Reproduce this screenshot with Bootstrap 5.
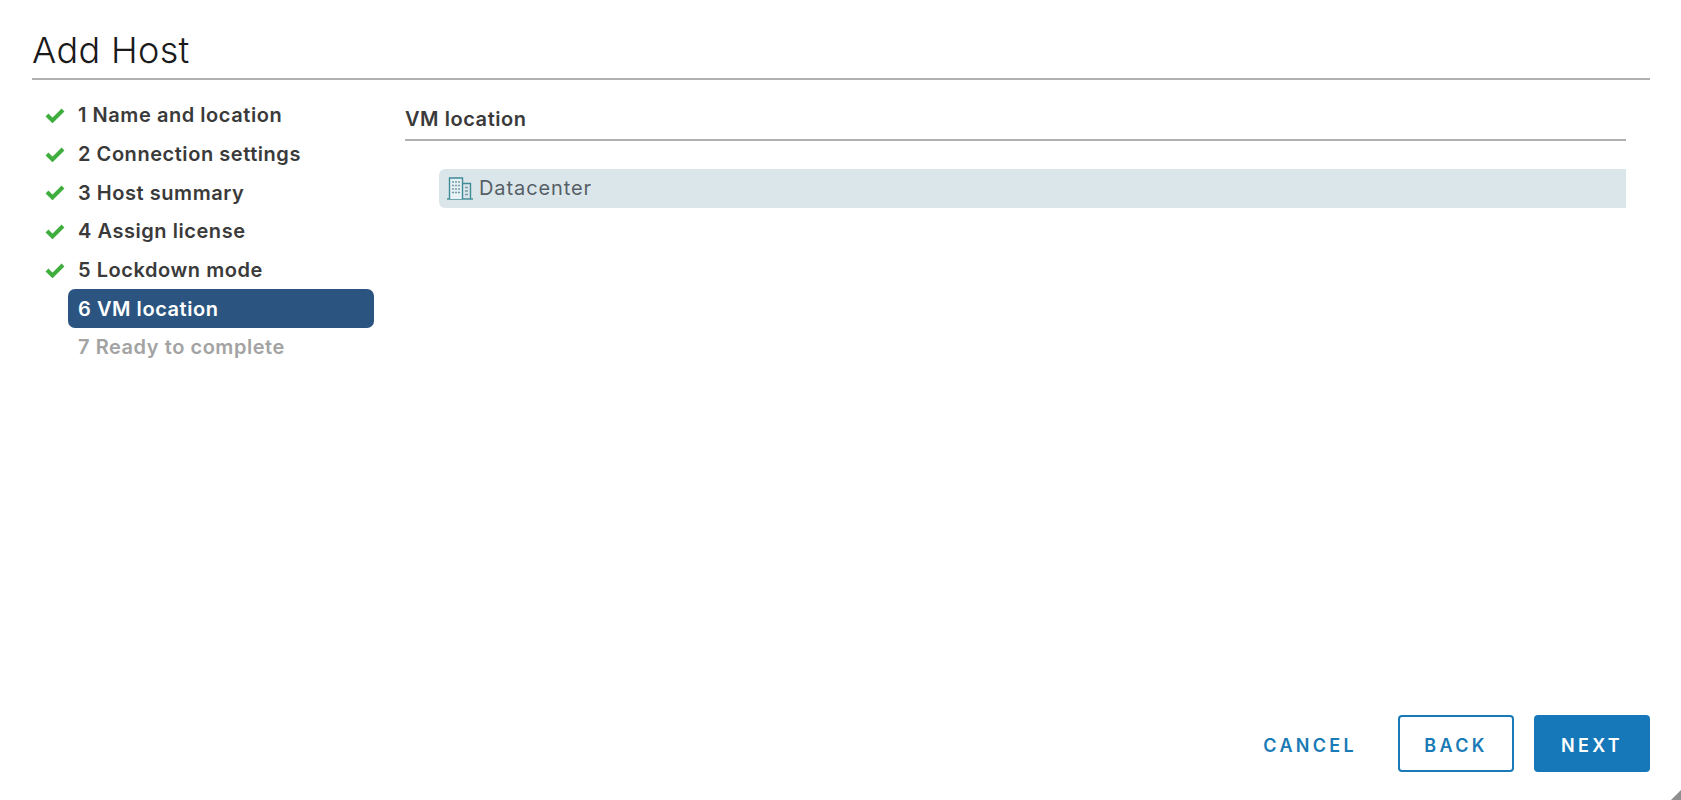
<!DOCTYPE html>
<html lang="en">
<head>
<meta charset="utf-8">
<title>Add Host</title>
<link href="https://cdn.jsdelivr.net/npm/bootstrap@5.3.0/dist/css/bootstrap.min.css" rel="stylesheet">
<style>
html,body{height:100%;background:#fff;overflow:hidden}
body{font-family:Inter,"Liberation Sans",sans-serif;color:#333}
.wiz-shell{height:800px;padding:0 31px 0 32px;position:relative}
.wiz-title{font-size:36px;font-weight:300;line-height:44px;color:#1a1a1a;margin:0;padding-top:28px;padding-bottom:6px;border-bottom:2px solid #b0b0b0;letter-spacing:.35px}
.wiz-body{min-height:0}
.wiz-side{width:342px;padding:16px 0 0 0;flex:none}
.wiz-step{height:38.7px;font-size:20px;font-weight:600;letter-spacing:.55px;color:#3a3a3a;padding-left:46px;position:relative;display:flex;align-items:center;white-space:nowrap}
.wiz-check{position:absolute;left:13px;top:11px;width:20px;height:16px}
.wiz-step-on{background:#2b5580;color:#fff;border-radius:7px;margin-left:36px;padding-left:10px;width:306px}
.wiz-step-off{color:#a3a3a3}
.wiz-main{padding:0 24px 0 31px}
.wiz-head{font-size:20px;font-weight:600;letter-spacing:.55px;color:#3a3a3a;margin:0;padding-top:22px;height:61px;border-bottom:2px solid #b0b0b0;line-height:34px}
.wiz-row{margin:28px 0 0 34px;height:39px;background:#dbe6eb;border-radius:6px 0 0 6px;padding-left:8px;padding-bottom:2px;font-size:20px;letter-spacing:.9px;color:#565f66;gap:6px}
.wiz-foot{padding-bottom:28px;gap:20px}
.wiz-btn{width:116px;height:57px;font-size:18px;font-weight:600;letter-spacing:3.3px;border-radius:4px;display:flex;align-items:center;justify-content:center;padding:3px 0 0;font-family:Inter,"Liberation Sans",sans-serif}
.wiz-cancel{width:auto;color:#1a7ab5;background:transparent;border:0;margin-right:21px}
.wiz-back{color:#1a7ab5;background:#fff;border:2px solid #1a7ab5}
.wiz-next{color:#fff;background:#1678b8;border:2px solid #1678b8}
.wiz-grip{position:absolute;right:0;bottom:0;width:12px;height:10px}
</style>
</head>
<body>
<div class="wiz-shell d-flex flex-column">
  <h1 class="wiz-title">Add Host</h1>
  <div class="wiz-body d-flex flex-grow-1">
    <ul class="wiz-side list-unstyled mb-0">
      <li class="wiz-step"><svg class="wiz-check" viewBox="0 0 20 16"><path d="M2 8l5.5 5.5L18 3" fill="none" stroke="#3fae3f" stroke-width="4"/></svg>1 Name and location</li>
      <li class="wiz-step"><svg class="wiz-check" viewBox="0 0 20 16"><path d="M2 8l5.5 5.5L18 3" fill="none" stroke="#3fae3f" stroke-width="4"/></svg>2 Connection settings</li>
      <li class="wiz-step"><svg class="wiz-check" viewBox="0 0 20 16"><path d="M2 8l5.5 5.5L18 3" fill="none" stroke="#3fae3f" stroke-width="4"/></svg>3 Host summary</li>
      <li class="wiz-step"><svg class="wiz-check" viewBox="0 0 20 16"><path d="M2 8l5.5 5.5L18 3" fill="none" stroke="#3fae3f" stroke-width="4"/></svg>4 Assign license</li>
      <li class="wiz-step"><svg class="wiz-check" viewBox="0 0 20 16"><path d="M2 8l5.5 5.5L18 3" fill="none" stroke="#3fae3f" stroke-width="4"/></svg>5 Lockdown mode</li>
      <li class="wiz-step wiz-step-on">6 VM location</li>
      <li class="wiz-step wiz-step-off">7 Ready to complete</li>
    </ul>
    <div class="wiz-main flex-grow-1">
      <h2 class="wiz-head">VM location</h2>
      <div class="wiz-row d-flex align-items-center">
        <svg width="26" height="24" viewBox="0 0 26 24" fill="none" stroke="#3f8a96" stroke-width="1.4"><path d="M0 23h26"/><path d="M2.5 23V2h13v21" fill="#e6f2f6"/><path d="M15.5 7.5h8V23"/><path d="M5 6h2M8 6h2M11 6h2M5 9.5h2M8 9.5h2M11 9.5h2M5 13h2M8 13h2M11 13h2M5 16.5h2M8 16.5h2M11 16.5h2M18 11.5h3M18 15h3M18 18.5h3" stroke="#7a9aa8" stroke-width="1.5"/></svg>
        <span>Datacenter</span>
      </div>
    </div>
  </div>
  <div class="wiz-foot d-flex justify-content-end align-items-center">
    <button type="button" class="btn wiz-btn wiz-cancel">CANCEL</button>
    <button type="button" class="btn wiz-btn wiz-back">BACK</button>
    <button type="button" class="btn wiz-btn wiz-next">NEXT</button>
  </div>
  <svg class="wiz-grip" viewBox="0 0 12 10"><path d="M12 0v10H2z" fill="#8f8f8f"/></svg>
</div>
</body>
</html>
